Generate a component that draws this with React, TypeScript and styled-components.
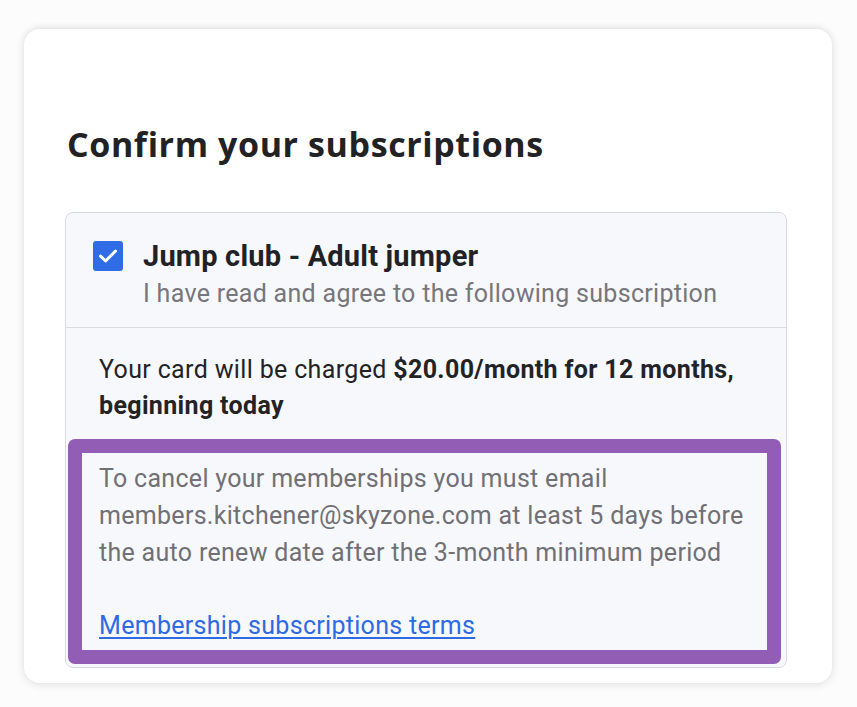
import React from 'react'
import styled, { createGlobalStyle } from 'styled-components'

const GlobalStyle = createGlobalStyle`
  html, body {
    margin: 0;
    padding: 0;
    background: #fcfcfc;
  }
  body {
    font-family: Roboto, "Liberation Sans", Arial, sans-serif;
    color: #232326;
  }
`

const Page = styled.div`
  padding: 29px 25px 24px 24px;
`

const Card = styled.div`
  background: #ffffff;
  border-radius: 16px;
  box-shadow: 0 1px 10px rgba(0, 0, 0, 0.12), 0 -3px 6px rgba(0, 0, 0, 0.03);
  padding: 89px 45px 15px 41px;
  display: flex;
  flex-direction: column;
`

const Heading = styled.h1`
  margin: 0 0 0 2px;
  font-family: "Open Sans", Lato, sans-serif;
  font-weight: 700;
  font-size: 34px;
  line-height: 52px;
  letter-spacing: 0.6px;
  color: #222224;
`

const Box = styled.div`
  margin-top: 42px;
  background: #f7f8fc;
  border: 1.5px solid #d9d9de;
  border-radius: 8px;
  display: flex;
  flex-direction: column;
`

const Header = styled.label`
  display: flex;
  align-items: flex-start;
  gap: 20px;
  padding: 26px 10px 15px 27px;
  border-bottom: 1.5px solid #dcdce0;
`

const Check = styled.span`
  flex: none;
  width: 30px;
  height: 30px;
  margin-top: 2px;
  border-radius: 3px;
  background: #2f6ce6;
  display: flex;
  align-items: center;
  justify-content: center;
`

const HeaderText = styled.div`
  display: flex;
  flex-direction: column;
`

const Title = styled.div`
  font-weight: 700;
  font-size: 29px;
  line-height: 34px;
  letter-spacing: 0.2px;
  color: #222224;
`

const Subtitle = styled.div`
  margin-top: 3px;
  font-size: 25px;
  line-height: 36px;
  letter-spacing: 0.3px;
  color: #76767b;
`

const Body = styled.div`
  padding: 24px 5px 3px 2px;
  display: flex;
  flex-direction: column;
`

const Charge = styled.p`
  margin: 0 0 16px 31px;
  font-size: 25px;
  line-height: 35.5px;
  letter-spacing: 0.35px;
  color: #232326;

  strong {
    font-weight: 700;
  }
`

const Highlight = styled.div`
  border: 14px solid #925db5;
  border-radius: 7px;
  background: #f7f8fc;
`

const Notice = styled.div`
  padding: 8px 10px 5px 17px;
  font-size: 25px;
  line-height: 36.8px;
  letter-spacing: 0.3px;
  color: #707075;
`

const Spacer = styled.div`
  height: 36.8px;
`

const TermsLink = styled.a`
  color: #2d6ae3;
  text-decoration: underline;
  text-underline-offset: 3px;
  text-decoration-thickness: 1.5px;
`

export default function App() {
  return (
    <>
      <GlobalStyle />
      <Page>
        <Card>
          <Heading>Confirm your subscriptions</Heading>
          <Box>
            <Header>
              <Check>
                <svg width="20" height="16" viewBox="0 0 20 16" fill="none">
                  <path d="M2.5 8.2 L7.6 13 L17.5 3" stroke="#ffffff" strokeWidth="3" strokeLinecap="round" strokeLinejoin="round" />
                </svg>
              </Check>
              <HeaderText>
                <Title>Jump club - Adult jumper</Title>
                <Subtitle>I have read and agree to the following subscription</Subtitle>
              </HeaderText>
            </Header>
            <Body>
              <Charge>
                Your card will be charged <strong>$20.00/month for 12 months,</strong>
                <br />
                <strong>beginning today</strong>
              </Charge>
              <Highlight>
                <Notice>
                  To cancel your memberships you must email members.kitchener@skyzone.com at least 5 days before the auto renew date after the 3-month minimum period
                  <Spacer />
                  <TermsLink href="#">Membership subscriptions terms</TermsLink>
                </Notice>
              </Highlight>
            </Body>
          </Box>
        </Card>
      </Page>
    </>
  )
}
